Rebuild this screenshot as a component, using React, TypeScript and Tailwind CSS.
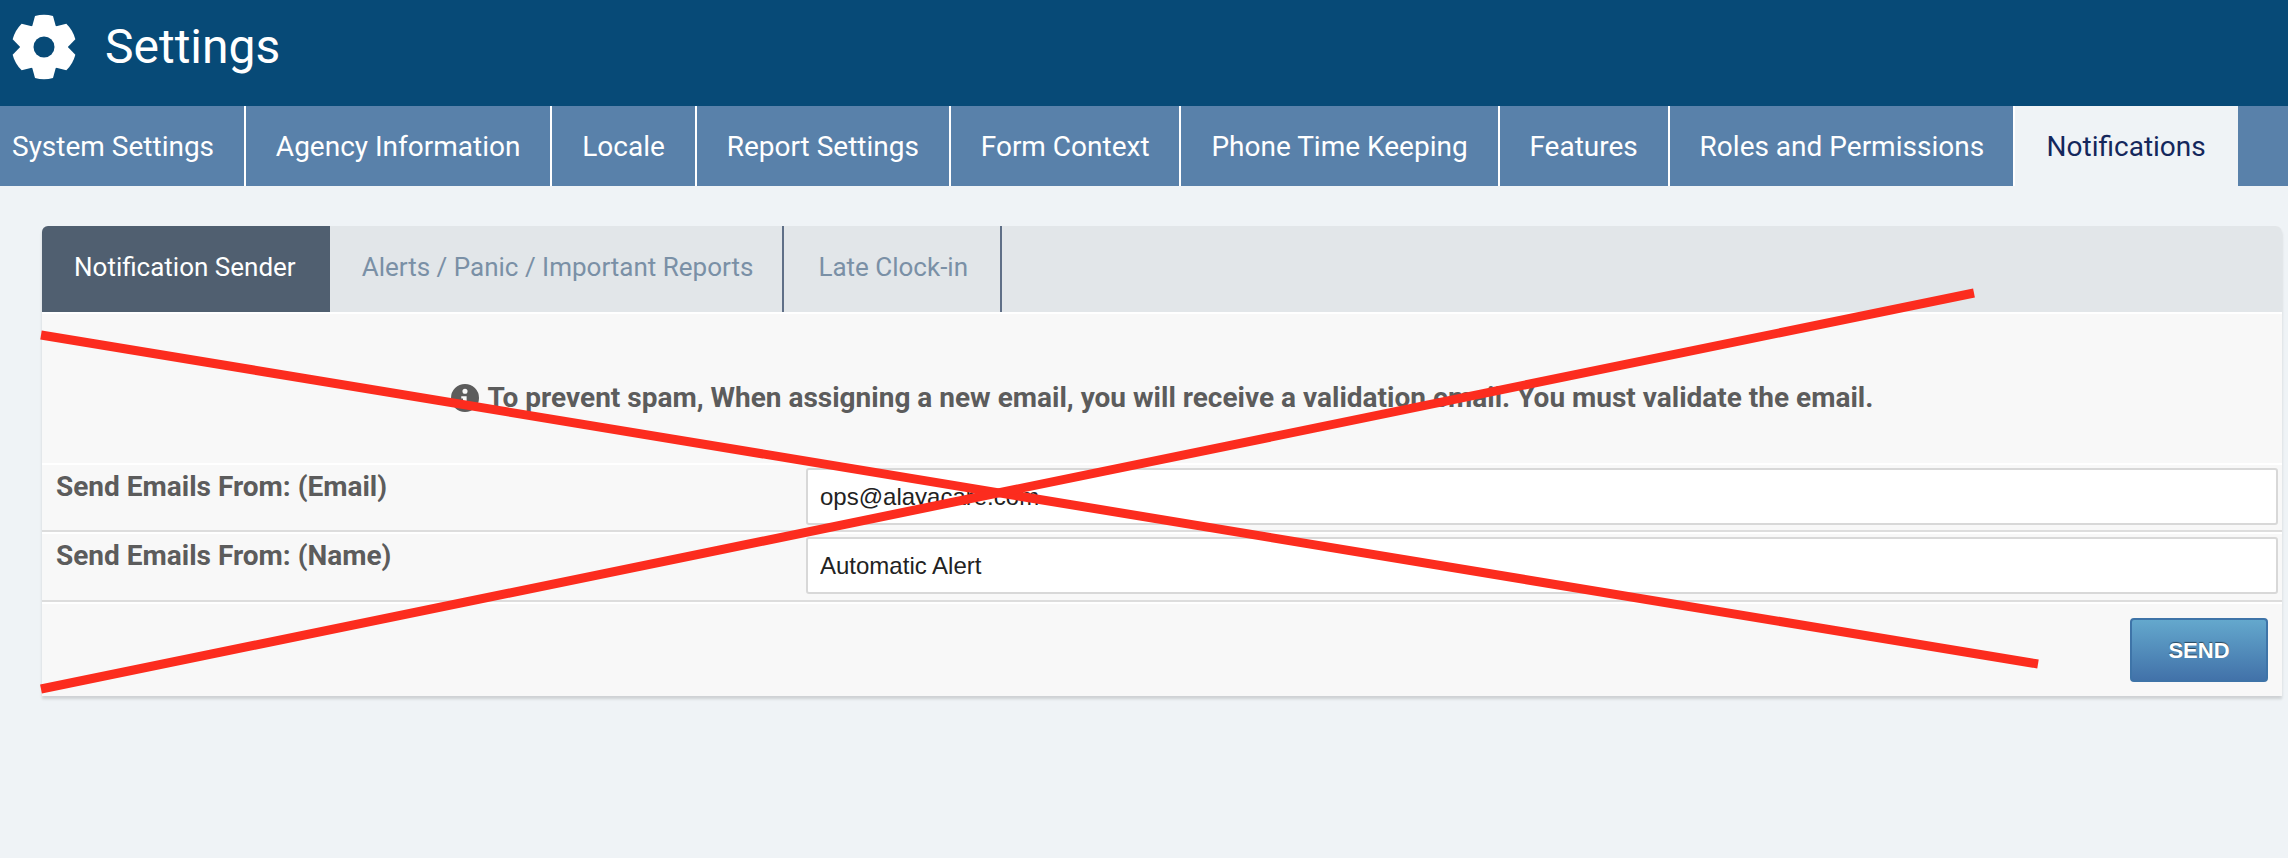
const topTabs = [
  "System Settings",
  "Agency Information",
  "Locale",
  "Report Settings",
  "Form Context",
  "Phone Time Keeping",
  "Features",
  "Roles and Permissions",
];

function Gear() {
  return (
    <svg viewBox="-33 -33 66 66" className="w-[66px] h-[66px] shrink-0 fill-white">
      <circle r="24" />
      {[0, 60, 120, 180, 240, 300].map((deg) => (
        <path key={deg} transform={`rotate(${deg})`} d="M-12 -20 L-9 -31 Q0 -33.5 9 -31 L12 -20 Z" />
      ))}
      <circle r="10.5" className="fill-[#074a77]" />
    </svg>
  );
}

function FormRow({ label, value, className }: { label: string; value: string; className: string }) {
  return (
    <div className={`flex border-t-2 border-t-white border-b-2 border-b-[#dddddd] ${className}`}>
      <div className="w-[764px] pl-[14px] pt-[2px] font-bold text-[28px] leading-[40px] text-[#5c5c5c]">
        {label}
      </div>
      <div className="flex-1 pr-[4px] pt-[3px]">
        <input
          readOnly
          value={value}
          className="w-full h-[57px] bg-white border-2 border-[#d8d8d8] rounded-[3px] px-3 text-[24px] text-[#222222] font-['Liberation_Sans',sans-serif] outline-none"
        />
      </div>
    </div>
  );
}

export default function App() {
  return (
    <div className="relative min-h-[858px] bg-[#eff3f6] font-['Roboto',sans-serif] overflow-hidden">
      <header className="h-[106px] bg-[#074a77] flex items-center pl-[11px] pb-[12px]">
        <Gear />
        <h1 className="ml-[28px] text-[48px] text-white leading-none">Settings</h1>
      </header>

      <nav className="flex h-[80px] bg-[#5981aa] text-[28px] text-white">
        {topTabs.map((tab, i) => (
          <div
            key={tab}
            className={`flex items-center pt-[1px] border-r-2 border-white ${i === 0 ? "pl-3" : "pl-[29.9px]"} ${
              i === topTabs.length - 1 ? "border-r-0 pr-[28.5px]" : "pr-[29.9px]"
            }`}
          >
            {tab}
          </div>
        ))}
        <div className="flex items-center pt-[1px] px-[32px] bg-[#eff3f6] text-[#14275c]">Notifications</div>
      </nav>

      <main className="pt-10 pl-[42px] pr-[6px]">
        <section className="rounded-t-[6px] bg-[#f8f8f8] shadow-[0_3px_3px_rgba(0,0,0,0.14)]">
          <div className="flex h-[86px] bg-[#e2e6e9] rounded-t-[6px] text-[26px]">
            <div className="flex items-center pb-[3px] pl-[32px] pr-[34px] bg-[#505f70] text-white rounded-tl-[6px]">
              Notification Sender
            </div>
            <div className="flex items-center pb-[3px] pl-[32px] pr-[29px] border-r-2 border-[#5f6f87] text-[#7a90a6]">
              Alerts / Panic / Important Reports
            </div>
            <div className="flex items-center pb-[3px] pl-[34px] pr-[32px] border-r-2 border-[#5f6f87] text-[#7a90a6]">
              Late Clock-in
            </div>
          </div>

          <div className="h-[151px] border-t-2 border-white flex items-center justify-center pt-[18px] font-bold text-[28px] text-[#5c5c5c]">
            <svg viewBox="0 0 24 24" className="w-[28px] h-[28px] fill-[#5c5c5c] mr-[9px]">
              <path fillRule="evenodd" d="M12 0a12 12 0 1 0 0 24 12 12 0 0 0 0-24zm0 4a2.2 2.2 0 1 1 0 4.4 2.2 2.2 0 0 1 0-4.4zM15.2 19.4H8.8v-2h1.5v-5H8.8v-2h4.6v7h1.8v2z" />
            </svg>
            To prevent spam, When assigning a new email, you will receive a validation email. You must validate the email.
          </div>

          <FormRow className="h-[69px]" label="Send Emails From: (Email)" value="ops@alayacare.com" />
          <FormRow className="h-[70px]" label="Send Emails From: (Name)" value="Automatic Alert" />

          <div className="h-[94px] border-t-2 border-white flex items-start justify-end pt-[14px] pr-[14px]">
            <button className="w-[138px] h-[64px] rounded-[4px] border-2 border-[#3e74a8] bg-gradient-to-b from-[#64a8cd] to-[#4272a9] text-white font-bold text-[22px] font-['Liberation_Sans',sans-serif] [text-shadow:0_-1px_1px_rgba(0,0,0,0.5)]">
              SEND
            </button>
          </div>
        </section>
      </main>

      {/* red cross drawn over the page */}
      <svg className="absolute left-0 top-0 w-[2288px] h-[858px] pointer-events-none" viewBox="0 0 2288 858">
        <line x1="41" y1="335" x2="2038" y2="664" stroke="#fc2c1e" strokeWidth="9" />
        <line x1="41" y1="689" x2="1974" y2="293" stroke="#fc2c1e" strokeWidth="9" />
      </svg>
    </div>
  );
}
